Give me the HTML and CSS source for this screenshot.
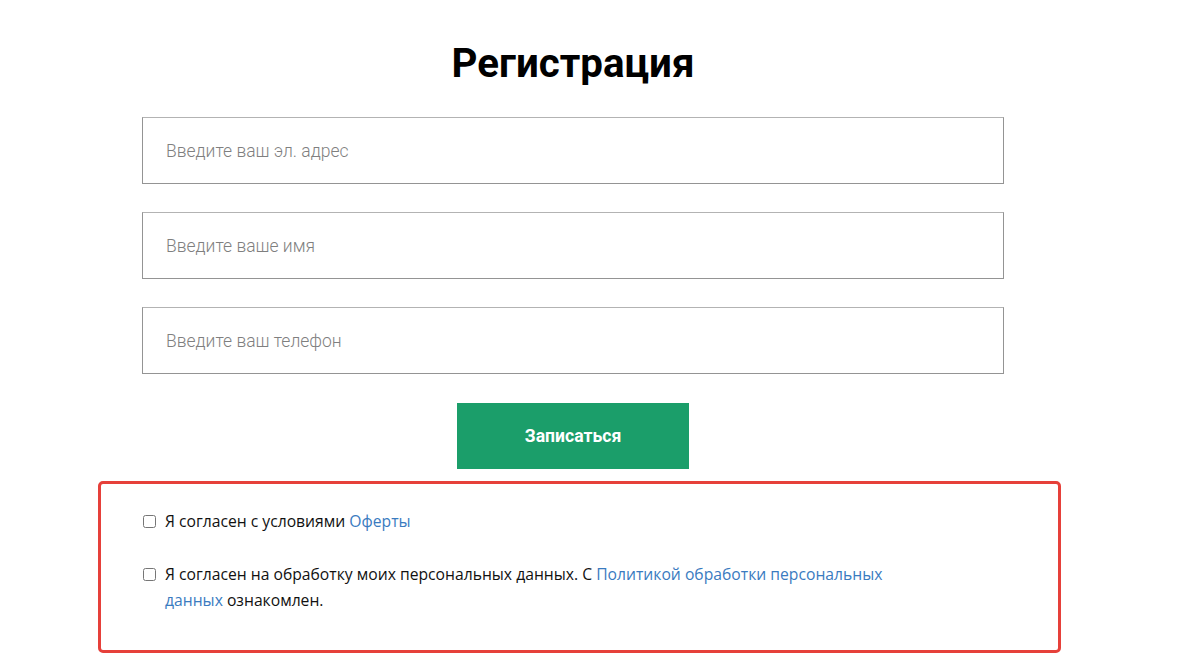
FILE: index.html
```html
<!DOCTYPE html>
<html lang="ru">
<head>
<meta charset="utf-8">
<title>Регистрация</title>
<link rel="stylesheet" href="styles.css">
</head>
<body>
<div class="page">
  <form class="form">
    <h1 class="title">Регистрация</h1>
    <input class="field" type="email" placeholder="Введите ваш эл. адрес">
    <input class="field" type="text" placeholder="Введите ваше имя">
    <input class="field" type="tel" placeholder="Введите ваш телефон">
    <div class="actions">
      <button class="submit" type="button">Записаться</button>
    </div>
  </form>
  <div class="consent">
    <label class="check">
      <input type="checkbox" class="box">
      <span class="check-text">Я согласен с условиями <a href="#" class="link">Оферты</a></span>
    </label>
    <label class="check">
      <input type="checkbox" class="box">
      <span class="check-text">Я согласен на обработку моих персональных данных. С <a href="#" class="link">Политикой обработки персональных данных</a> ознакомлен.</span>
    </label>
  </div>
</div>
</body>
</html>
```
FILE: styles.css
```css
* { box-sizing: border-box; }
html, body { margin: 0; padding: 0; background: #fff; }
body { font-family: Roboto, "Liberation Sans", sans-serif; color: #000; }

.page { width: 1200px; height: 661px; overflow: hidden; }

.form {
  width: 862px;
  margin-left: 142px;
  display: flex;
  flex-direction: column;
}

.title {
  margin: 40px 0 29px;
  font-family: Roboto, sans-serif;
  font-weight: 700;
  font-size: 40.3px;
  line-height: 48px;
  text-align: center;
  color: #000;
}

.field {
  display: block;
  width: 100%;
  height: 67px;
  margin: 0 0 28px;
  padding: 0 23px;
  border: 1px solid #949494;
  border-top-color: #b3b3b3;
  border-radius: 0;
  background: #fff;
  font-family: Roboto, sans-serif;
  font-size: 17.5px;
  font-weight: 300;
  color: #333;
  outline: none;
}
.field::placeholder { color: #7f7f7f; opacity: 1; }

.actions {
  display: flex;
  justify-content: center;
  padding-top: 1px;
}

.submit {
  width: 232px;
  height: 66px;
  border: 0;
  border-radius: 0;
  background: #1b9e6a;
  color: #fff;
  font-family: Roboto, sans-serif;
  font-weight: 700;
  font-size: 17.6px;
  cursor: pointer;
}

.consent {
  margin: 12px 0 0 98px;
  width: 963px;
  height: 172px;
  border: 3px solid #e6403a;
  border-radius: 5px;
  padding: 24px 0 0 42px;
  display: flex;
  flex-direction: column;
  gap: 27px;
  font-family: "Open Sans", sans-serif;
  font-size: 15.7px;
  line-height: 26px;
  color: #111;
}

.check {
  display: flex;
  align-items: flex-start;
  gap: 9px;
}

.box {
  flex: none;
  width: 13px;
  height: 13px;
  margin: 7px 0 0 0;
}

.check-text { max-width: 745px; }

.link { color: #3a7bbf; text-decoration: none; }
```
